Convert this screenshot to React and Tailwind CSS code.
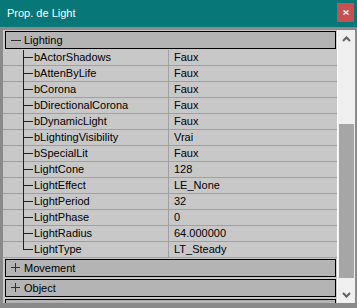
import React from 'react';

const rows = [
    ['bActorShadows', 'Faux'],
    ['bAttenByLife', 'Faux'],
    ['bCorona', 'Faux'],
    ['bDirectionalCorona', 'Faux'],
    ['bDynamicLight', 'Faux'],
    ['bLightingVisibility', 'Vrai'],
    ['bSpecialLit', 'Faux'],
    ['LightCone', '128'],
    ['LightEffect', 'LE_None'],
    ['LightPeriod', '32'],
    ['LightPhase', '0'],
    ['LightRadius', '64.000000'],
    ['LightType', 'LT_Steady']
];

const GroupHeader = ({ label, open, className = '' }) => (
    <div className={`ml-[2px] mr-px h-[18px] shrink-0 flex items-center border border-black bg-[#b4b4b4] ${className}`}>
        <div className="w-[18px] flex items-center justify-center">
            {open ? (
                <div className="w-[10px] h-px bg-[#303030] ml-[2px]" />
            ) : (
                <svg width="10" height="10" viewBox="0 0 10 10" className="ml-[2px]">
                    <path d="M0 4.5H9M4.5 0V9" stroke="#303030" strokeWidth="1" />
                </svg>
            )}
        </div>
        <span className="text-[11px] leading-none text-black">{label}</span>
    </div>
);

const PropRow = ({ name, value, last }) => (
    <div className="flex h-[16px] shrink-0">
        <div className="w-[20px] border-b border-[#a0a0a0]" />
        <div className="relative w-[11px] border-b border-[#a0a0a0]">
            <div className={`absolute left-0 top-0 w-px bg-[#202020] ${last ? 'h-[8px]' : '-bottom-px'}`} />
            <div className="absolute left-0 top-[7px] w-[10px] h-px bg-[#202020]" />
        </div>
        <div className="w-[134px] border-b border-[#a0a0a0] text-[11px] leading-[15px] text-black">
            {name}
        </div>
        <div className="flex-1 border-b border-l border-[#a0a0a0] pl-[5px] text-[11px] leading-[15px] text-black">
            {value}
        </div>
    </div>
);

const App = () => {
    return (
        <div
            className="w-[357px] h-[308px] overflow-hidden flex flex-col bg-[#8a8a8a]"
            style={{ fontFamily: '"Liberation Sans", Arial, sans-serif' }}
        >
            {/* Title bar */}
            <div className="h-[27px] shrink-0 bg-[#077877] flex items-center justify-between pl-[7px] pr-[3px]">
                <span className="text-[11px] text-white leading-none">Prop. de Light</span>
                <div className="w-[17px] h-[19px] bg-[#c75050] flex items-center justify-center mb-[2px]">
                    <svg width="6" height="5" viewBox="0 0 6 5">
                        <path d="M0.5 0.5L5.5 4.5M5.5 0.5L0.5 4.5" stroke="#fff" strokeWidth="1.4" />
                    </svg>
                </div>
            </div>

            {/* Body */}
            <div className="flex-1 flex pt-[3px] pl-[3px] pr-[2px] pb-[5px] min-h-0">
                <div className="w-[334px] bg-[#c8c8c8] flex flex-col overflow-hidden pt-px">
                    <GroupHeader label="Lighting" open />
                    <div className="flex flex-col mt-px">
                        {rows.map(([name, value], index) => (
                            <PropRow key={name} name={name} value={value} last={index === rows.length - 1} />
                        ))}
                    </div>
                    <GroupHeader label="Movement" className="mt-px" />
                    <GroupHeader label="Object" className="mt-[2px]" />
                    <GroupHeader label="Sound" className="mt-[2px]" />
                </div>

                {/* Scrollbar */}
                <div className="w-[18px] border-l border-white bg-[#f0f0f0] flex flex-col">
                    <div className="h-[17px] flex items-center justify-center">
                        <svg width="9" height="6" viewBox="0 0 9 6">
                            <path d="M1 5L4.5 1.5L8 5" stroke="#606060" strokeWidth="2" fill="none" />
                        </svg>
                    </div>
                    <div className="mt-[77px] mx-px h-[154px] bg-[#a6a6a6]" />
                    <div className="flex-1" />
                    <div className="h-[17px] flex items-center justify-center">
                        <svg width="9" height="6" viewBox="0 0 9 6">
                            <path d="M1 1L4.5 4.5L8 1" stroke="#606060" strokeWidth="2" fill="none" />
                        </svg>
                    </div>
                </div>
            </div>
        </div>
    );
};

export default App;
